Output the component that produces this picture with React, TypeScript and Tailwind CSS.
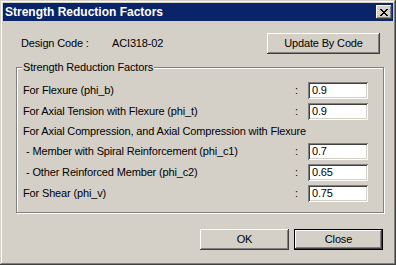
const rows = [
  { label: "For Flexure (phi_b)", value: "0.9" },
  { label: "For Axial Tension with Flexure (phi_t)", value: "0.9" },
  { label: "For Axial Compression, and Axial Compression with Flexure", value: null },
  { label: "- Member with Spiral Reinforcement (phi_c1)", value: "0.7", indent: true },
  { label: "- Other Reinforced Member (phi_c2)", value: "0.65", indent: true },
  { label: "For Shear (phi_v)", value: "0.75" },
];

const raised =
  "shadow-[inset_-1px_-1px_#404040,inset_1px_1px_#ffffff,inset_-2px_-2px_#808080,inset_2px_2px_#d4d0c8]";

function Button({ label, width, isDefault }: { label: string; width: string; isDefault?: boolean }) {
  return (
    <div className={`${width} h-[21px] ${isDefault ? "border border-black" : ""}`}>
      <div className={`w-full h-full bg-[#d4d0c8] ${raised} flex items-center justify-center text-black`}>
        {label}
      </div>
    </div>
  );
}

export default function App() {
  return (
    <div
      className="w-[396px] h-[265px] bg-[#d4d0c8] p-[3px] shadow-[inset_-1px_-1px_#404040,inset_1px_1px_#d4d0c8,inset_-2px_-2px_#808080,inset_2px_2px_#ffffff] text-[11px] tracking-[-0.15px] text-black"
      style={{ fontFamily: '"Liberation Sans", Arial, sans-serif' }}
    >
      {/* Title bar */}
      <div className="h-[18px] bg-[#0a246a] flex items-center pl-[2px] pr-[1px]">
        <span className="text-white font-bold text-[12px] tracking-normal leading-none">Strength Reduction Factors</span>
        <div className={`ml-auto w-[16px] h-[14px] bg-[#d4d0c8] ${raised} flex items-center justify-center`}>
          <svg width="8" height="7" viewBox="0 0 8 7">
            <path d="M0 0h2v1h1v1h2V1h1V0h2v1H7v1H6v1H5v1h1v1h1v1h1v1H6V6H5V5H3v1H2v1H0V6h1V5h1V4h1V3H2V2H1V1H0z" fill="#000" />
          </svg>
        </div>
      </div>

      {/* Design code */}
      <div className="mt-[12px] h-[21px] flex items-center pl-[18px]">
        <span className="w-[91px]">Design Code :</span>
        <span>ACI318-02</span>
        <div className="ml-auto mr-[13px]">
          <Button label="Update By Code" width="w-[113px]" />
        </div>
      </div>

      {/* Group box */}
      <div className="relative mt-[13px] ml-[13px] w-[368px] h-[146px] border border-[#808080] shadow-[inset_1px_1px_#ffffff,1px_1px_#ffffff] pt-[12px] pl-[6px] pr-[15px]">
        <span className="absolute left-[5px] -top-[8px] px-[1px] bg-[#d4d0c8] leading-[14px]">
          Strength Reduction Factors
        </span>
        {rows.map((row, i) => (
          <div
            key={i}
            className={`flex items-center ${row.value ? "h-[21px]" : "h-[19px]"} ${row.indent ? "pl-[3px]" : ""}`}
          >
            <span className="flex-1 whitespace-nowrap">{row.label}</span>
            {row.value && (
              <>
                <span className="w-[16px] pl-[3px]">:</span>
                <div className="w-[60px] h-[17px] bg-white shadow-[inset_1px_1px_#808080,inset_-1px_-1px_#ffffff,inset_2px_2px_#404040,inset_-2px_-2px_#d4d0c8] flex items-center pl-[4px]">
                  {row.value}
                </div>
              </>
            )}
          </div>
        ))}
      </div>

      {/* Bottom buttons */}
      <div className="mt-[16px] flex gap-[5px] pl-[197px]">
        <Button label="OK" width="w-[89px]" />
        <Button label="Close" width="w-[89px]" isDefault />
      </div>
    </div>
  );
}
